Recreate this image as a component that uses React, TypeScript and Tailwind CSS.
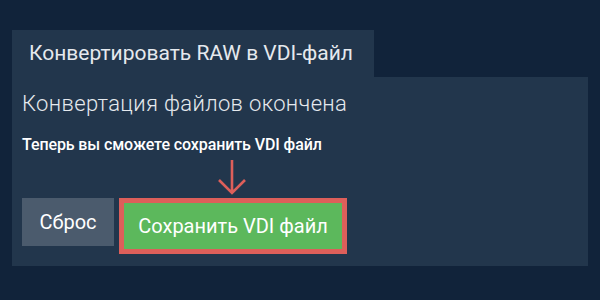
export default function App() {
    return (
        <div className="w-[600px] h-[300px] bg-[#11233a] px-3 pt-[30px] font-['Roboto',sans-serif]">
            {/* Tab */}
            <div className="inline-flex h-[47px] items-center bg-[#22364c] pl-[17px] pr-[21px] text-[21px] text-[#e5e9ee]">
                Конвертировать RAW в VDI-файл
            </div>

            {/* Panel */}
            <div className="h-[189px] bg-[#22364c] pl-[10px] pt-[12px]">
                <h2 className="text-[22px] font-light leading-[30px] tracking-[0.35px] text-[#e5e9ee]">
                    Конвертация файлов окончена
                </h2>
                <p className="mt-[16px] text-[16px] font-medium leading-[20px] tracking-[-0.1px] text-white">
                    Теперь вы сможете сохранить VDI файл
                </p>
                <div className="relative mt-[43px] flex items-start gap-[5px]">
                    <button className="h-[48px] w-[92px] bg-[#4b5b6d] text-[20px] text-white">Сброс</button>
                    <div className="relative">
                        <svg
                            className="absolute left-[97px] top-[-39px]"
                            width="32"
                            height="38"
                            viewBox="0 0 32 38"
                        >
                            <path d="M16 1 V34 M3 21 L16 34 L29 21" stroke="#dd5f5a" strokeWidth="2.6" fill="none" />
                        </svg>
                        <button className="h-[56px] w-[228px] border-[5px] border-[#dd5f5a] bg-[#5cb85c] text-[20px] text-white">
                            Сохранить VDI файл
                        </button>
                    </div>
                </div>
            </div>
        </div>
    );
}
